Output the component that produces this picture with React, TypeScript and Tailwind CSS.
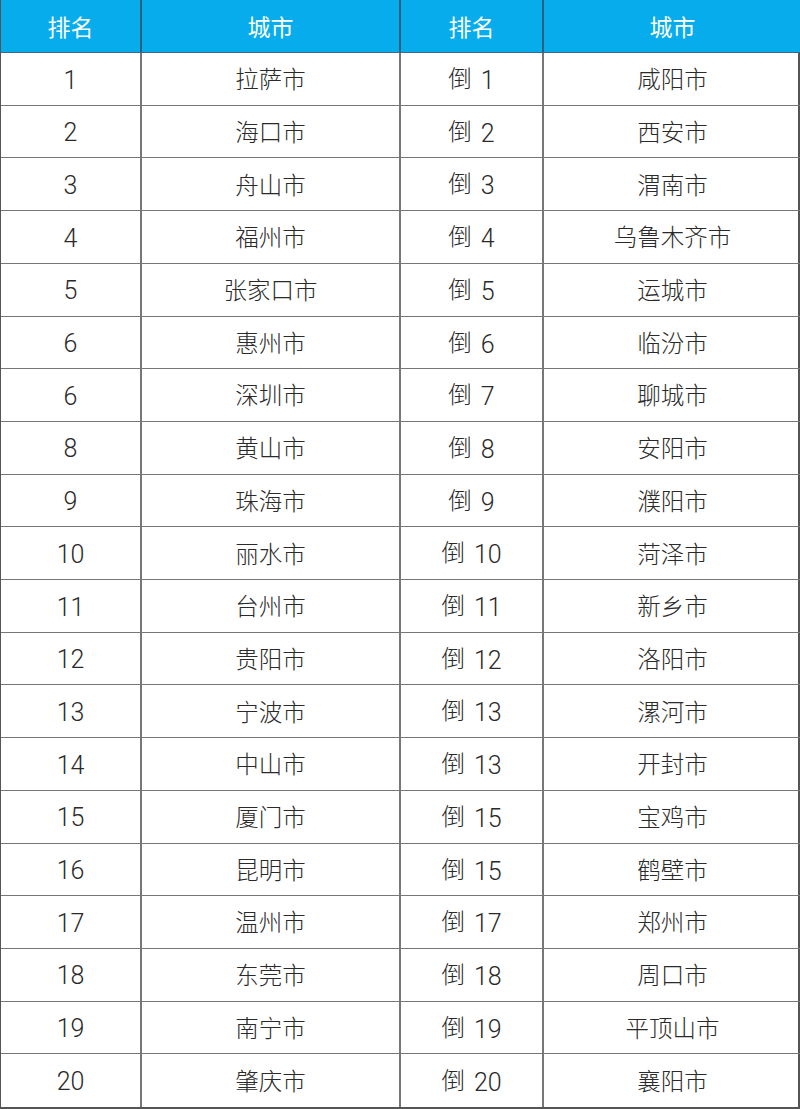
import React from "react";

const left: [string, string][] = [
  ["1", "拉萨市"], ["2", "海口市"], ["3", "舟山市"], ["4", "福州市"], ["5", "张家口市"],
  ["6", "惠州市"], ["6", "深圳市"], ["8", "黄山市"], ["9", "珠海市"], ["10", "丽水市"],
  ["11", "台州市"], ["12", "贵阳市"], ["13", "宁波市"], ["14", "中山市"], ["15", "厦门市"],
  ["16", "昆明市"], ["17", "温州市"], ["18", "东莞市"], ["19", "南宁市"], ["20", "肇庆市"],
];
const right: [string, string][] = [
  ["1", "咸阳市"], ["2", "西安市"], ["3", "渭南市"], ["4", "乌鲁木齐市"], ["5", "运城市"],
  ["6", "临汾市"], ["7", "聊城市"], ["8", "安阳市"], ["9", "濮阳市"], ["10", "菏泽市"],
  ["11", "新乡市"], ["12", "洛阳市"], ["13", "漯河市"], ["13", "开封市"], ["15", "宝鸡市"],
  ["15", "鹤壁市"], ["17", "郑州市"], ["18", "周口市"], ["19", "平顶山市"], ["20", "襄阳市"],
];

const cjk = { fontFamily: '"Noto Sans CJK SC", "Noto Sans", sans-serif' };
const num = { fontFamily: 'Roboto, "Liberation Sans", sans-serif' };

export default function App() {
  return (
    <div className="w-[800px] h-[1109px] bg-white" style={cjk}>
      <div className="grid h-[1109px] grid-cols-[141px_259px_143px_257px] grid-rows-[53px_repeat(20,1fr)] border-l-[1.5px] border-r-[2px] border-b-[2px] border-[#555]">
        {["排名", "城市", "排名", "城市"].map((h, i) => (
          <div
            key={i}
            className={`flex items-center justify-center bg-[#06acec] text-white text-[23px] border-b-[1.5px] border-[#3b6a86] ${i < 3 ? "border-r-[2px] border-r-[#2f5f7c]" : ""}`}
          >
            {h}
          </div>
        ))}
        {left.map((l, r) => {
          const rr = right[r];
          const last = r === 19;
          const rowB = last ? "" : "border-b-[1.5px] border-b-[#777]";
          return (
            <React.Fragment key={r}>
              <div className={`flex items-center justify-center pt-[3px] text-[25px] font-light text-[#2a2a2a] border-r-[2px] border-r-[#777] ${rowB}`} style={num}>
                {l[0]}
              </div>
              <div className={`flex items-center justify-center text-[23.5px] font-light text-[#2a2a2a] border-r-[2px] border-r-[#777] ${rowB}`}>
                {l[1]}
              </div>
              <div className={`flex items-center justify-center text-[23.5px] font-light text-[#2a2a2a] border-r-[2px] border-r-[#777] ${rowB}`}>
                <div className="flex items-baseline gap-[9px]">
                  <span>倒</span>
                  <span className="text-[25px] translate-y-[2px]" style={num}>{rr[0]}</span>
                </div>
              </div>
              <div className={`flex items-center justify-center text-[23.5px] font-light text-[#2a2a2a] ${rowB}`}>
                {rr[1]}
              </div>
            </React.Fragment>
          );
        })}
      </div>
    </div>
  );
}
